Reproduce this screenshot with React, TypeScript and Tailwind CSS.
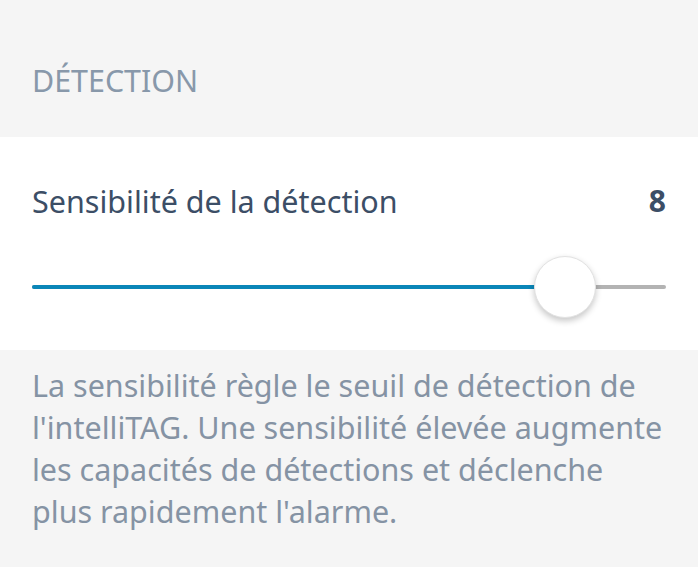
export default function App() {
  const value = 8
  // thumb centre sits at ~84% of the track in the reference
  const pct = 84.1

  return (
    <div className="w-[698px] h-[567px] bg-[#f5f5f5] overflow-hidden" style={{ fontFamily: '"Noto Sans", "Open Sans", sans-serif' }}>
      <div className="h-[137px] px-8 pt-[61px]">
        <h2 className="text-[30.4px] leading-[40px] text-[#8898aa] uppercase">Détection</h2>
      </div>

      <div className="bg-white h-[213px] px-8 pt-[44px]">
        <div className="flex items-center justify-between">
          <span className="text-[30.5px] leading-[40px] text-[#3c4e66]">Sensibilité de la détection</span>
          <span className="text-[30px] leading-[40px] font-bold text-[#3c4e66]">{value}</span>
        </div>
        <div className="relative mt-[64px] h-[4px] rounded-full bg-[#b3b3b3]">
          <div className="h-full rounded-full bg-[#0a86b8]" style={{ width: `${pct}%` }} />
          <div
            className="absolute top-1/2 w-[62px] h-[62px] -translate-x-1/2 -translate-y-1/2 rounded-full bg-white border border-[#e2e2e2] shadow-[0_3px_6px_rgba(0,0,0,0.22)]"
            style={{ left: `${pct}%` }}
          />
        </div>
      </div>

      <div className="px-8 pt-[14px]">
        <p className="text-[30.5px] leading-[42px] text-[#8593a4]">
          La sensibilité règle le seuil de détection de l'intelliTAG. Une sensibilité élevée augmente les capacités de détections et déclenche plus rapidement l'alarme.
        </p>
      </div>
    </div>
  )
}
